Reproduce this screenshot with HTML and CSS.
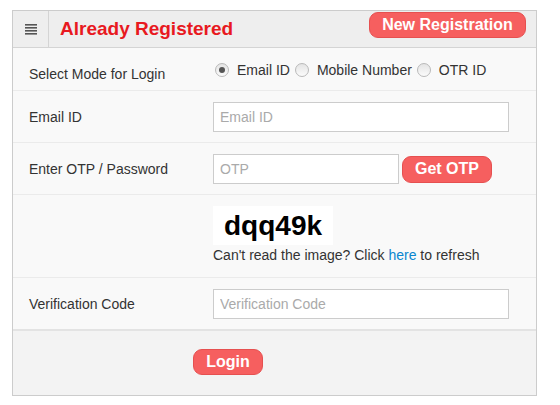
FILE: index.html
```html
<!DOCTYPE html>
<html lang="en">
<head>
    <meta charset="UTF-8">
    <meta name="viewport" content="width=device-width, initial-scale=1.0">
    <title>Already Registered</title>
    <link rel="stylesheet" href="styles.css">
</head>
<body>
    <div class="panel">
        <div class="panel-head">
            <div class="menu-cell">
                <svg width="12" height="11" viewBox="0 0 12 11">
                    <rect x="0" y="0" width="12" height="1.6" fill="#555"/>
                    <rect x="0" y="3" width="12" height="1.6" fill="#555"/>
                    <rect x="0" y="6" width="12" height="1.6" fill="#555"/>
                    <rect x="0" y="9" width="12" height="1.6" fill="#555"/>
                </svg>
            </div>
            <h1>Already Registered</h1>
            <button class="btn btn-head">New Registration</button>
        </div>

        <div class="row row-mode">
            <div class="label">Select Mode for Login</div>
            <div class="field radios">
                <span class="radio checked"></span><span class="radio-text">Email ID</span>
                <span class="radio"></span><span class="radio-text">Mobile Number</span>
                <span class="radio"></span><span class="radio-text">OTR ID</span>
            </div>
        </div>

        <div class="row">
            <div class="label">Email ID</div>
            <div class="field"><input class="input" type="text" placeholder="Email ID"></div>
        </div>

        <div class="row">
            <div class="label">Enter OTP / Password</div>
            <div class="field">
                <input class="input input-otp" type="text" placeholder="OTP">
                <button class="btn btn-otp">Get OTP</button>
            </div>
        </div>

        <div class="row row-captcha">
            <div class="label"></div>
            <div class="field captcha">
                <div class="captcha-img">dqq49k</div>
                <div class="captcha-note">Can't read the image? Click <a href="#">here</a> to refresh</div>
            </div>
        </div>

        <div class="row row-last">
            <div class="label">Verification Code</div>
            <div class="field"><input class="input" type="text" placeholder="Verification Code"></div>
        </div>

        <div class="panel-foot">
            <button class="btn btn-login">Login</button>
        </div>
    </div>
</body>
</html>
```

FILE: styles.css
```css
body {
    font-family: "Liberation Sans", Arial, sans-serif;
    margin: 0;
    padding: 0;
    background-color: #fff;
    color: #333;
}

.panel {
    width: 523px;
    margin: 10px 0 0 12px;
    border: 1px solid #ccc;
    background-color: #f9f9f9;
}

.panel-head {
    display: flex;
    align-items: center;
    height: 36px;
    background-color: #eee;
    border-bottom: 1px solid #d4d4d4;
}

.menu-cell {
    width: 35px;
    height: 36px;
    border-right: 1px solid #d4d4d4;
    display: flex;
    align-items: center;
    justify-content: center;
}

h1 {
    flex: 1;
    margin: 0 0 0 11px;
    font-size: 19px;
    font-weight: bold;
    color: #e8191f;
}

.btn {
    font-family: "Liberation Sans", Arial, sans-serif;
    font-weight: bold;
    font-size: 16px;
    color: #fff;
    background-color: #f65f5f;
    border: 1px solid #e65050;
    border-radius: 9px;
    padding: 0;
    cursor: pointer;
}

.btn-head {
    width: 157px;
    height: 26px;
    margin: -8px 10px 0 0;
}

.row {
    display: grid;
    grid-template-columns: 200px 1fr;
    align-items: center;
    height: 51px;
    border-bottom: 1px solid #ebebeb;
}

.row-mode {
    height: 42px;
}

.row-captcha {
    height: 82px;
    align-items: start;
}

.row-last {
    border-bottom: 2px solid #e3e3e3;
}

.label {
    padding-left: 16px;
    font-size: 14px;
    color: #333;
}

.row-mode .label {
    padding-top: 9px;
}

.field {
    display: flex;
    align-items: center;
}

.radios {
    font-size: 14px;
    padding-top: 1px;
}

.radio {
    width: 12px;
    height: 12px;
    border: 1px solid #b9b9b9;
    border-radius: 50%;
    background: linear-gradient(#e4e4e4, #fbfbfb);
    margin: 0 8px 0 2px;
    position: relative;
}

.radio.checked::after {
    content: "";
    position: absolute;
    left: 3px;
    top: 3px;
    width: 6px;
    height: 6px;
    border-radius: 50%;
    background-color: #555;
}

.radio-text {
    margin-right: 3px;
}

.input {
    width: 296px;
    height: 30px;
    box-sizing: border-box;
    border: 1px solid #ccc;
    background-color: #fff;
    font-family: "Liberation Sans", Arial, sans-serif;
    font-size: 14px;
    padding: 0 6px;
    margin-top: 1px;
    outline: none;
}

.input::placeholder {
    color: #aaa;
}

.input-otp {
    width: 186px;
}

.btn-otp {
    width: 90px;
    height: 27px;
    margin-left: 3px;
    margin-top: 1px;
}

.captcha {
    flex-direction: column;
    align-items: flex-start;
    padding-top: 11px;
}

.captcha-img {
    width: 120px;
    height: 39px;
    box-sizing: border-box;
    background-color: #fff;
    color: #000;
    font-size: 28px;
    font-weight: bold;
    line-height: 39px;
    padding-left: 11px;
}

.captcha-note {
    font-size: 14px;
    margin-top: 2px;
}

.captcha-note a {
    color: #0a86cf;
    text-decoration: none;
}

.panel-foot {
    height: 64px;
    background-color: #f3f3f3;
    display: flex;
    align-items: center;
    padding-left: 180px;
}

.btn-login {
    width: 70px;
    height: 26px;
    margin-top: -2px;
}
```
